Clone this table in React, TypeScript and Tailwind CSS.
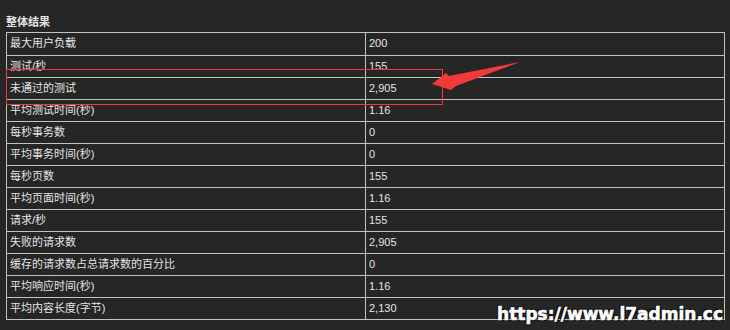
const ROWS: [string, string][] = [
  ["最大用户负载", "200"],
  ["测试/秒", "155"],
  ["未通过的测试", "2,905"],
  ["平均测试时间(秒)", "1.16"],
  ["每秒事务数", "0"],
  ["平均事务时间(秒)", "0"],
  ["每秒页数", "155"],
  ["平均页面时间(秒)", "1.16"],
  ["请求/秒", "155"],
  ["失败的请求数", "2,905"],
  ["缓存的请求数占总请求数的百分比", "0"],
  ["平均响应时间(秒)", "1.16"],
  ["平均内容长度(字节)", "2,130"],
];

export default function App() {
  return (
    <div
      className="relative w-[730px] h-[330px] overflow-hidden bg-[#262626] text-[#e4e4e4] pl-[6px] pt-[12px]"
      style={{ fontFamily: '"Liberation Sans", "Noto Sans CJK SC", sans-serif' }}
    >
      <div className="h-[20px] leading-[20px] text-[11px] font-bold">整体结果</div>

      {/* result table */}
      <div className="w-[719px] border border-[#c4c4bc]">
        {ROWS.map(([k, v], i) => (
          <div key={k} className={`flex h-[22px] ${i === 0 ? "h-[21px]" : "border-t border-[#c4c4bc]"}`}>
            <div className="w-[359px] shrink-0 border-r border-[#c4c4bc] pl-[3px] text-[11px] leading-[21px]">{k}</div>
            <div className="flex-1 pl-[3px] text-[11px] leading-[21px]">{v}</div>
          </div>
        ))}
      </div>

      {/* highlight box */}
      <div className="absolute left-[6px] top-[69px] w-[437px] h-[36px] border border-[#f03838]" />

      {/* arrow */}
      <svg className="absolute left-0 top-0" width="730" height="330" viewBox="0 0 730 330">
        <polygon points="432,84 446,73 449,76 520,62 456,86 451,90" fill="#f23a3a" />
      </svg>

      {/* watermark */}
      <div
        className="absolute right-[7px] top-[304px] text-[17px] leading-[20px] font-bold text-white [-webkit-text-stroke:0.6px_white] [text-shadow:0_0_1px_#000,1px_1px_1px_#000,-1px_-1px_1px_#000]"
        style={{ fontFamily: '"DejaVu Sans", sans-serif' }}
      >
        https://www.l7admin.cc
      </div>
    </div>
  );
}
